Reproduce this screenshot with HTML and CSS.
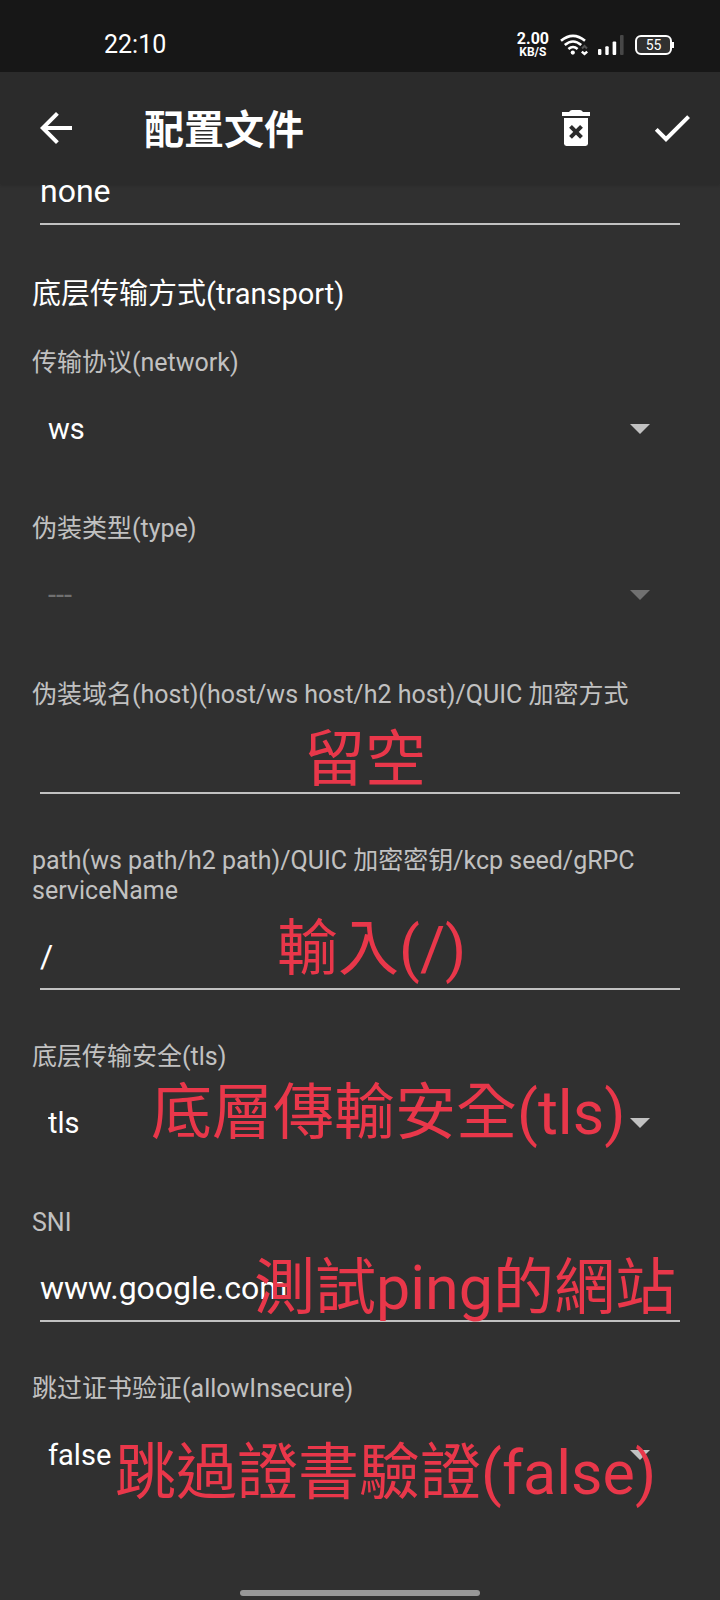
FILE: index.html
```html
<!DOCTYPE html>
<html lang="zh-CN">
<head>
<meta charset="utf-8">
<meta name="viewport" content="width=device-width, initial-scale=1">
<title>配置文件</title>
<link rel="stylesheet" href="styles.css">
</head>
<body>
<div class="screen">
  <div class="status-bar">
    <time class="clock">22:10</time>
    <div class="indicators">
      <div class="speed"><span class="speed-value">2.00</span><span class="speed-unit">KB/S</span></div>
      <svg class="wifi" width="28" height="22" viewBox="0 0 28 22" aria-hidden="true">
        <g fill="none" stroke="#fff" stroke-width="2.6">
          <path d="M1 6.8Q13 -3.2 25 6.8"/>
          <path d="M4.8 11Q13 4 21.2 11"/>
          <path d="M8.4 15Q13 11 17.6 15"/>
        </g>
        <circle cx="12.8" cy="18.6" r="2.1" fill="#fff"/>
        <path d="M22 14.5l2.5-2.5 2.5 2.5" fill="none" stroke="#555" stroke-width="2"/>
        <path d="M21.8 17.6l2.7 2.4 2.7-2.4" fill="none" stroke="#fff" stroke-width="2.4"/>
      </svg>
      <svg class="signal" width="26" height="20" viewBox="0 0 26 20" aria-hidden="true">
        <g fill="#fff">
          <rect x="0" y="14" width="3.4" height="6" rx="1"/>
          <rect x="7.3" y="11.3" width="3.4" height="8.7" rx="1"/>
          <rect x="14.6" y="6.5" width="3.6" height="13.5" rx="1"/>
        </g>
        <rect x="22" y="0" width="3.6" height="20" rx="1" fill="#474747"/>
      </svg>
      <div class="battery">55</div>
    </div>
  </div>

  <header class="app-bar">
    <button class="icon-button back" type="button" aria-label="返回">
      <svg width="48" height="48" viewBox="0 0 24 24" aria-hidden="true"><path fill="#fff" d="M20 11H7.83l5.59-5.59L12 4l-8 8 8 8 1.41-1.41L7.83 13H20v-2z"/></svg>
    </button>
    <h1 class="title">配置文件</h1>
    <button class="icon-button" type="button" aria-label="删除">
      <svg width="48" height="48" viewBox="0 0 24 24" aria-hidden="true">
        <path fill="#fff" d="M5 4h3.5Q9.200 3 10 3h4q.8 0 1.500 1H19v2H5z"/>
        <path fill="#fff" d="M6 7h12v12.800q0 1.200-1.200 1.200H7.200Q6 21 6 19.800z"/>
        <path d="M9.250 11.200l5.500 5.500M14.750 11.200l-5.500 5.500" stroke="#2b2b2b" stroke-width="2"/>
      </svg>
    </button>
    <button class="icon-button" type="button" aria-label="保存">
      <svg width="48" height="48" viewBox="0 0 24 24" aria-hidden="true"><path fill="#fff" d="M9 16.170L4.830 12l-1.420 1.410L9 19 21 7l-1.410-1.410z"/></svg>
    </button>
  </header>

  <main class="content">
    <form class="form">
      <div class="control"><input class="text-input" type="text" value="none" aria-label="加密方式"></div>

      <h2 class="section-title">底层传输方式(transport)</h2>

      <div class="field">
        <label class="label" for="network">传输协议(network)</label>
        <div class="control">
          <select class="select" id="network"><option>ws</option></select>
          <svg class="caret" width="20" height="10" viewBox="0 0 20 10" aria-hidden="true"><path d="M0 0h20L10 10z"/></svg>
        </div>
      </div>

      <div class="field">
        <label class="label" for="type">伪装类型(type)</label>
        <div class="control">
          <select class="select" id="type" disabled><option>---</option></select>
          <svg class="caret" width="20" height="10" viewBox="0 0 20 10" aria-hidden="true"><path d="M0 0h20L10 10z"/></svg>
        </div>
      </div>

      <div class="field">
        <label class="label" for="host">伪装域名(host)(host/ws host/h2 host)/QUIC 加密方式</label>
        <div class="control">
          <input class="text-input" id="host" type="text" value="">
          <span class="note note-host" lang="zh-TW">留空</span>
        </div>
      </div>

      <div class="field">
        <label class="label" for="path">path(ws path/h2 path)/QUIC 加密密钥/kcp seed/gRPC serviceName</label>
        <div class="control">
          <input class="text-input" id="path" type="text" value="/">
          <span class="note note-path" lang="zh-TW">輸入(/)</span>
        </div>
      </div>

      <div class="field">
        <label class="label" for="tls">底层传输安全(tls)</label>
        <div class="control">
          <select class="select" id="tls"><option>tls</option></select>
          <svg class="caret" width="20" height="10" viewBox="0 0 20 10" aria-hidden="true"><path d="M0 0h20L10 10z"/></svg>
          <span class="note note-tls" lang="zh-TW">底層傳輸安全(tls)</span>
        </div>
      </div>

      <div class="field">
        <label class="label" for="sni">SNI</label>
        <div class="control">
          <input class="text-input" id="sni" type="text" value="www.google.com">
          <span class="note note-sni" lang="zh-TW">測試ping的網站</span>
        </div>
      </div>

      <div class="field">
        <label class="label" for="insecure">跳过证书验证(allowInsecure)</label>
        <div class="control">
          <select class="select" id="insecure"><option>false</option></select>
          <svg class="caret" width="20" height="10" viewBox="0 0 20 10" aria-hidden="true"><path d="M0 0h20L10 10z"/></svg>
          <span class="note note-insecure" lang="zh-TW">跳過證書驗證(false)</span>
        </div>
      </div>
    </form>
  </main>

  <div class="nav-handle"></div>
</div>
</body>
</html>
```

FILE: styles.css
```css
* {
  box-sizing: border-box;
}

body {
  margin: 0;
  background: #303030;
  color: #fff;
  font-family: Roboto, "Noto Sans CJK SC", sans-serif;
}

.screen {
  display: flex;
  flex-direction: column;
  min-height: 100vh;
}

.status-bar {
  display: flex;
  align-items: center;
  justify-content: space-between;
  height: 72px;
  padding: 18px 48px 0 104px;
  background: #171717;
}

.clock {
  font-size: 25px;
  line-height: 32px;
}

.indicators {
  display: flex;
  align-items: center;
}

.speed {
  display: flex;
  flex-direction: column;
  align-items: center;
  margin-right: 11px;
  font-weight: 700;
}

.speed-value {
  font-size: 16px;
  line-height: 14px;
}

.speed-unit {
  font-size: 12px;
  line-height: 12px;
}

.wifi {
  margin-right: 10px;
}

.signal {
  margin-right: 11px;
}

.battery {
  position: relative;
  width: 37px;
  height: 20px;
  border: 2px solid #fff;
  border-radius: 6px;
  background: #303030;
  font-size: 14px;
  line-height: 16px;
  text-align: center;
}

.battery::after {
  content: "";
  position: absolute;
  top: 5px;
  right: -4px;
  width: 2px;
  height: 6px;
  background: #fff;
}

.app-bar {
  display: flex;
  align-items: center;
  height: 112px;
  background: #2b2b2b;
  box-shadow: 0 2px 2px rgba(0, 0, 0, 0.1);
}

.icon-button {
  display: flex;
  align-items: center;
  justify-content: center;
  width: 96px;
  height: 96px;
  padding: 0;
  border: 0;
  background: none;
}

.back {
  width: 112px;
}

.title {
  flex: 1;
  margin: 0;
  padding: 6px 0 0 32px;
  font-size: 40px;
  font-weight: 700;
  line-height: 56px;
}

.content {
  flex: 1;
}

.form {
  margin-top: -25px;
  padding: 0 32px;
}

.control {
  position: relative;
  margin: 0 8px;
}

.section-title {
  margin: 51px 0 36px;
  font-size: 29px;
  font-weight: 400;
  line-height: 36px;
}

.field {
  display: flex;
  flex-direction: column;
  gap: 18px;
  margin-bottom: 52px;
}

.label {
  color: #c1c1c1;
  font-size: 25px;
  line-height: 30px;
}

.text-input,
.select {
  display: block;
  width: 100%;
  height: 66px;
  margin: 0;
  border: 0;
  border-radius: 0;
  outline: 0;
  background: none;
  color: #fff;
  font-family: inherit;
}

.text-input {
  padding: 0;
  border-bottom: 2px solid #c1c1c1;
  font-size: 32px;
}

.select {
  appearance: none;
  padding: 0 60px 0 8px;
  font-size: 29px;
}

.select:disabled {
  color: #707070;
  opacity: 1;
}

.caret {
  position: absolute;
  top: 28px;
  right: 30px;
  fill: #c1c1c1;
  pointer-events: none;
}

.select:disabled + .caret {
  fill: #707070;
}

.note {
  position: absolute;
  color: #e9374a;
  font-family: Roboto, "Noto Sans CJK TC", sans-serif;
  font-size: 61px;
  line-height: 72px;
  white-space: nowrap;
  pointer-events: none;
}

.note-host {
  top: -4px;
  left: 264px;
}

.note-path {
  top: -11px;
  left: 237px;
}

.note-tls {
  top: -13px;
  left: 111px;
}

.note-sni {
  top: -4px;
  left: 214px;
}

.note-insecure {
  top: 15px;
  left: 75px;
}

.nav-handle {
  align-self: center;
  width: 240px;
  height: 6px;
  margin-bottom: 4px;
  border-radius: 3px;
  background: #989898;
}
```
